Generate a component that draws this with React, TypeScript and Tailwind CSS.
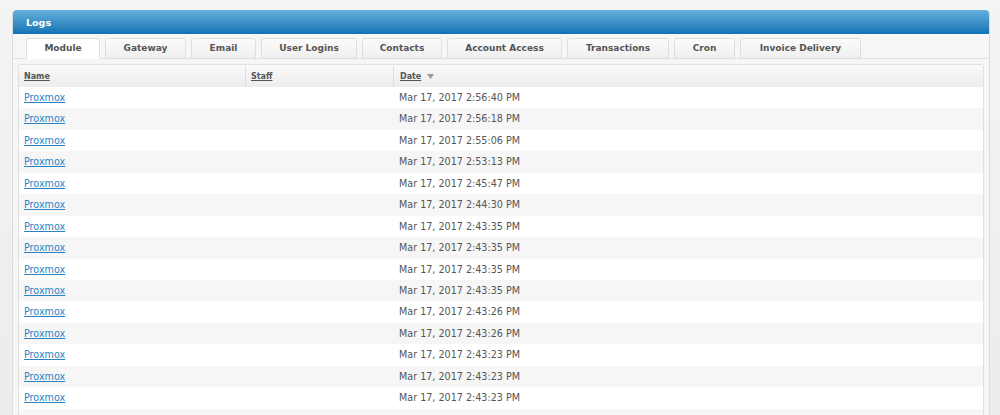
const tabs = [
  { label: "Module", w: 74 },
  { label: "Gateway", w: 81 },
  { label: "Email", w: 65 },
  { label: "User Logins", w: 96 },
  { label: "Contacts", w: 80 },
  { label: "Account Access", w: 115 },
  { label: "Transactions", w: 102 },
  { label: "Cron", w: 61 },
  { label: "Invoice Delivery", w: 121 },
];

const dates = [
  "Mar 17, 2017 2:56:40 PM",
  "Mar 17, 2017 2:56:18 PM",
  "Mar 17, 2017 2:55:06 PM",
  "Mar 17, 2017 2:53:13 PM",
  "Mar 17, 2017 2:45:47 PM",
  "Mar 17, 2017 2:44:30 PM",
  "Mar 17, 2017 2:43:35 PM",
  "Mar 17, 2017 2:43:35 PM",
  "Mar 17, 2017 2:43:35 PM",
  "Mar 17, 2017 2:43:35 PM",
  "Mar 17, 2017 2:43:26 PM",
  "Mar 17, 2017 2:43:26 PM",
  "Mar 17, 2017 2:43:23 PM",
  "Mar 17, 2017 2:43:23 PM",
  "Mar 17, 2017 2:43:23 PM",
];

export default function App() {
  return (
    <div className="h-[415px] overflow-hidden bg-gradient-to-b from-[#f4f4f4] to-[#ececec] pl-[12px] pt-[10px] font-['DejaVu_Sans',Verdana,sans-serif]">
      <div className="w-[978px] rounded-t-[4px] border-x border-[#dcdcdc] bg-[#f6f6f6]">
        <div className="flex h-[24px] items-center rounded-t-[4px] bg-gradient-to-b from-[#64b0dc] to-[#0a73b4] px-[13px] pt-[3px] text-[9.5px] font-bold text-white">
          Logs
        </div>

        <div className="flex gap-[5px] border-b border-[#e2e2e2] pl-[13px] pt-[4px]">
          {tabs.map((t, i) => (
            <div
              key={t.label}
              style={{ width: t.w }}
              className={`-mb-px flex h-[21px] items-center justify-center rounded-t-[3px] border border-[#dedede] pt-[1px] text-[9px] font-bold text-[#555] ${
                i === 0
                  ? "border-b-white bg-white"
                  : "bg-gradient-to-b from-[#fbfbfb] to-[#efefef]"
              }`}
            >
              {t.label}
            </div>
          ))}
        </div>

        <div className="px-[5px] pt-[5px]">
          <div className="w-[966px] overflow-hidden rounded-t-[3px] border border-[#e0e0e0] bg-white">
            <div className="grid h-[22px] grid-cols-[227px_148px_1fr] bg-gradient-to-b from-[#f9f9f9] to-[#ededed] pt-[1px] text-[8px] font-bold text-[#555]">
              <div className="flex items-center border-r border-[#dedede] pl-[5px]">
                <span className="underline">Name</span>
              </div>
              <div className="flex items-center border-r border-[#dedede] pl-[5px]">
                <span className="underline">Staff</span>
              </div>
              <div className="flex items-center pl-[6px]">
                <span className="underline">Date</span>
                <svg width="7" height="5" viewBox="0 0 7 5" className="ml-[6px]">
                  <path d="M0 0h7L3.5 5z" fill="#9a9a9a" />
                </svg>
              </div>
            </div>
            {dates.map((d, i) => (
              <div
                key={i}
                className={`grid h-[21.45px] grid-cols-[227px_148px_1fr] items-center pt-[1px] text-[9.6px] ${
                  i % 2 === 1 ? "bg-[#f6f6f6]" : "bg-white"
                }`}
              >
                <div className="pl-[5px]">
                  <a href="#" className="text-[#2b83c4] underline">
                    Proxmox
                  </a>
                </div>
                <div />
                <div className="pl-[5px] text-[#555]">{d}</div>
              </div>
            ))}
            <div className="h-[21.45px] bg-[#f6f6f6]" />
          </div>
        </div>
      </div>
    </div>
  );
}
